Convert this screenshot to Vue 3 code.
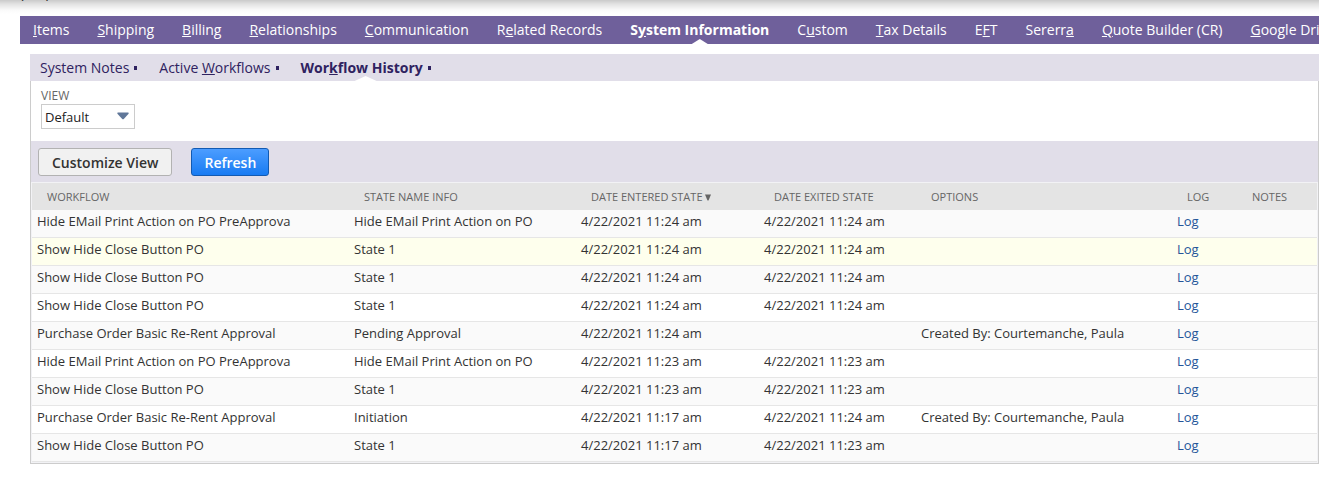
<script setup>
import { ref } from 'vue'

const tabs = [
  ['', 'I', 'tems'],
  ['', 'S', 'hipping'],
  ['', 'B', 'illing'],
  ['', 'R', 'elationships'],
  ['', 'C', 'ommunication'],
  ['R', 'e', 'lated Records'],
  ['S', 'y', 'stem Information'],
  ['C', 'u', 'stom'],
  ['', 'T', 'ax Details'],
  ['E', 'F', 'T'],
  ['Sererr', 'a', ''],
  ['', 'Q', 'uote Builder (CR)'],
  ['', 'G', 'oogle Drive'],
]
const activeTab = 6

const subtabs = [
  ['System Notes', '', ''],
  ['Active ', 'W', 'orkflows'],
  ['Wor', 'k', 'flow History'],
]
const activeSubtab = 2

const view = ref('Default')

const columns = ['Workflow', 'State Name Info', 'Date Entered State', 'Date Exited State', 'Options', 'Log', 'Notes']

const hide = 'Hide EMail Print Action on PO PreApprova'
const show = 'Show Hide Close Button PO'
const order = 'Purchase Order Basic Re-Rent Approval'
const hideState = 'Hide EMail Print Action on PO'
const creator = 'Created By: Courtemanche, Paula'
const day = '4/22/2021 '

const rows = [
  [hide, hideState, '11:24 am', '11:24 am', ''],
  [show, 'State 1', '11:24 am', '11:24 am', ''],
  [show, 'State 1', '11:24 am', '11:24 am', ''],
  [show, 'State 1', '11:24 am', '11:24 am', ''],
  [order, 'Pending Approval', '11:24 am', '', creator],
  [hide, hideState, '11:23 am', '11:23 am', ''],
  [show, 'State 1', '11:23 am', '11:23 am', ''],
  [order, 'Initiation', '11:17 am', '11:24 am', creator],
  [show, 'State 1', '11:17 am', '11:23 am', ''],
]
const highlighted = 1
</script>

<template>
  <div class="page">
    <div class="shade">
      <div class="scrolled"><span>(</span><span>)</span></div>
    </div>
    <nav class="tabs" aria-label="Record sections">
      <a v-for="(t, i) in tabs" :key="i" href="#" class="tab" :class="{ active: i === activeTab }">{{ t[0] }}<u>{{ t[1] }}</u>{{ t[2] }}</a>
    </nav>
    <main class="content">
      <nav class="subtabs" aria-label="System information">
        <a v-for="(t, i) in subtabs" :key="i" href="#" class="subtab" :class="{ active: i === activeSubtab }">
          <span>{{ t[0] }}<u>{{ t[1] }}</u>{{ t[2] }}</span><i class="dot"></i>
        </a>
      </nav>
      <section class="panel">
        <div class="filter">
          <label for="view">VIEW</label>
          <div class="select">
            <select id="view" v-model="view">
              <option>Default</option>
            </select>
            <svg width="12" height="8" viewBox="0 0 12 8" aria-hidden="true">
              <path d="M1 0.5H11Q12 0.5 11.6 1.8L7 6.8Q6 7.8 5 6.8L0.4 1.8Q0 0.5 1 0.5Z" fill="#607799" />
            </svg>
          </div>
        </div>
        <div class="actions">
          <button type="button" class="btn">Customize View</button>
          <button type="button" class="btn primary">Refresh</button>
        </div>
        <div class="grid">
          <table>
            <colgroup>
              <col class="c-flow" />
              <col class="c-state" />
              <col class="c-in" />
              <col class="c-out" />
              <col class="c-opt" />
              <col class="c-log" />
              <col class="c-notes" />
            </colgroup>
            <thead>
              <tr>
                <th v-for="(c, i) in columns" :key="c" scope="col">
                  {{ c }}<svg v-if="i === 2" class="sort" width="6" height="7" viewBox="0 0 6 7" aria-hidden="true"><path d="M0 0.5H6L3.500 6.500H2.500Z" fill="#666" /></svg>
                </th>
              </tr>
            </thead>
            <tbody>
              <tr v-for="(r, i) in rows" :key="i" :class="{ lit: i === highlighted }">
                <td>{{ r[0] }}</td>
                <td>{{ r[1] }}</td>
                <td>{{ day + r[2] }}</td>
                <td>{{ r[3] && day + r[3] }}</td>
                <td>{{ r[4] }}</td>
                <td><a href="#">Log</a></td>
                <td></td>
              </tr>
            </tbody>
          </table>
        </div>
      </section>
    </main>
  </div>
</template>

<style>
body {
  margin: 0;
  background: #fff;
}
</style>

<style scoped>
.page {
  overflow: hidden;
  font-family: "Open Sans", "Noto Sans", sans-serif;
  font-size: 13px;
  color: #333;
}
.shade {
  height: 16px;
  background: linear-gradient(#cacaca, #e2e2e2 4px, #fafafa 10px, #fff 14px);
}
.scrolled {
  display: flex;
  align-items: flex-end;
  gap: 22px;
  height: 3px;
  padding-left: 20px;
  overflow: hidden;
  line-height: 18px;
  color: #222;
}
a {
  text-decoration: none;
}
.tabs {
  display: flex;
  gap: 2px;
  height: 28px;
  margin-left: 20px;
  background: #6f609b;
}
.tab {
  position: relative;
  flex: none;
  padding: 0 13px;
  font-size: 14px;
  line-height: 28px;
  color: #fff;
}
.tab.active,
.subtab.active {
  font-weight: 700;
}
.tab.active::after,
.subtab.active::after {
  content: "";
  position: absolute;
  bottom: 0;
  left: 50%;
  width: 16px;
  height: 5px;
  margin-left: -8px;
  background: #fff;
  clip-path: polygon(0 100%, 50% 0, 100% 100%);
}
.content {
  margin: 10px 0 0 30px;
}
.subtabs {
  display: flex;
  gap: 2px;
  height: 27px;
  background: #e1dee9;
}
.subtab {
  position: relative;
  display: flex;
  align-items: center;
  gap: 5px;
  padding: 0 10px;
  font-size: 14px;
  line-height: 27px;
  color: #2f2260;
}
.subtab.active::after {
  width: 22px;
  margin-left: -11px;
}
.dot {
  width: 3px;
  height: 4px;
  background: #2f2260;
}
.panel {
  border: 1px solid #ccc;
  border-top: 0;
}
.filter {
  display: flex;
  flex-direction: column;
  align-items: flex-start;
  gap: 1px;
  padding: 7px 10px 12px;
}
.filter label {
  font-size: 12px;
  line-height: 15px;
  color: #666;
}
.select {
  position: relative;
  display: flex;
}
.select select {
  width: 94px;
  height: 25px;
  padding: 0 3px;
  border: 1px solid #ccc;
  border-radius: 0;
  appearance: none;
  background: #fff;
  font: 13px "Open Sans", "Noto Sans", sans-serif;
  color: #222;
}
.select svg {
  position: absolute;
  top: 8px;
  right: 6px;
  pointer-events: none;
}
.actions {
  display: flex;
  gap: 19px;
  padding: 7px 7px 6px;
  background: #e1dee9;
}
.btn {
  height: 28px;
  padding: 0 13px;
  border: 1px solid #b2b2b2;
  border-radius: 3px;
  background: #f1f1f1;
  font: 600 14px "Open Sans", "Noto Sans", sans-serif;
  color: #333;
}
.primary {
  padding: 0 12px;
  border-color: #125ab2;
  background: linear-gradient(#4c9dff, #187bf2);
  color: #fff;
}
.grid {
  padding: 1px;
  background: #f2f2f5;
}
table {
  width: 100%;
  table-layout: fixed;
  border-collapse: collapse;
}
.c-flow { width: 317px; }
.c-state { width: 227px; }
.c-in { width: 183px; }
.c-out { width: 157px; }
.c-opt { width: 256px; }
.c-log { width: 65px; }
.c-notes { width: 80px; }
th {
  height: 27px;
  padding: 0 0 0 15px;
  background: #e4e4e4;
  font-size: 11px;
  font-weight: 400;
  text-align: left;
  text-transform: uppercase;
  white-space: nowrap;
  color: #666;
}
.sort {
  margin-left: 2px;
}
td {
  height: 22px;
  padding: 0 0 5px 5px;
  border-bottom: 1px solid #e6e6e6;
  background: #fff;
  white-space: nowrap;
}
tr:nth-child(odd) td {
  background: #fafafa;
}
tr.lit td {
  background: #feffed;
}
td a {
  color: #255599;
}
</style>
